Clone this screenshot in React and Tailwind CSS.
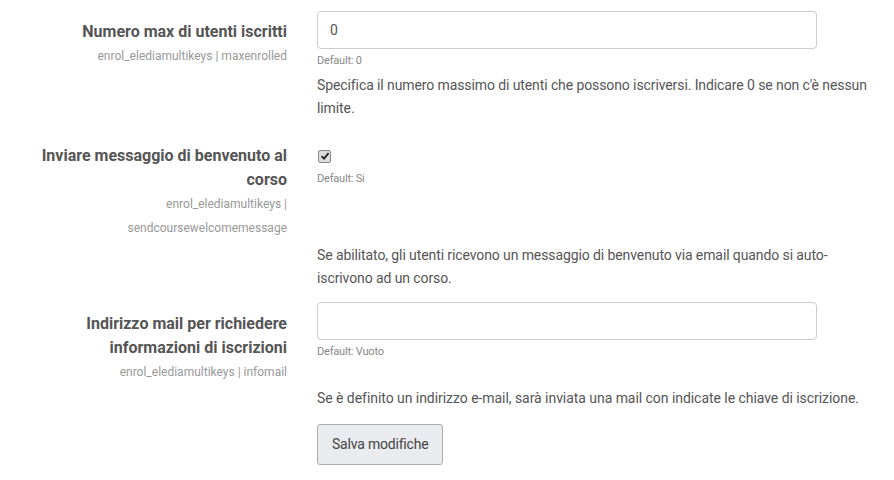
import React from "react";

const font = { fontFamily: "Roboto, 'Noto Sans', sans-serif" };

function Label({ title, sub, className = "" }) {
  return (
    <div className={`w-[287px] shrink-0 text-right ${className}`}>
      <div className="text-[16px] leading-[24px] font-bold text-[#555]">{title}</div>
      <div className="text-[12px] leading-[24px] text-[#999]">{sub}</div>
    </div>
  );
}

function Check() {
  return (
    <span className="inline-flex w-[13px] h-[13px] items-center justify-center rounded-[2px] border border-[#8a8a8a] bg-[#dcdcdc]">
      <svg width="10" height="10" viewBox="0 0 10 10">
        <path d="M1.5 5.2 L4 7.6 L8.6 2.2" fill="none" stroke="#222" strokeWidth="1.8" />
      </svg>
    </span>
  );
}

export default function App() {
  return (
    <div className="w-[894px] h-[480px] bg-white pt-[11px] text-[#555]" style={font}>
      {/* Numero max */}
      <div className="flex">
        <Label
          className="pt-[9px]"
          title="Numero max di utenti iscritti"
          sub="enrol_elediamultikeys | maxenrolled"
        />
        <div className="ml-[30px]">
          <div className="w-[500px] h-[38px] border border-[#ccc] rounded-[4px] px-[12px] flex items-center text-[14px] text-[#555]">
            0
          </div>
          <div className="mt-[3px] text-[11px] leading-[18px] tracking-[-0.2px] text-[#888]">Default: 0</div>
        </div>
      </div>
      <div className="ml-[317px] mt-[4px] text-[14px] leading-[23px] tracking-[-0.1px] whitespace-nowrap">
        Specifica il numero massimo di utenti che possono iscriversi. Indicare 0 se non c'è nessun
        <br />
        limite.
      </div>

      {/* Messaggio di benvenuto */}
      <div className="flex mt-[24px]">
        <Label
          title={<>Inviare messaggio di benvenuto al<br />corso</>}
          sub={<>enrol_elediamultikeys |<br />sendcoursewelcomemessage</>}
        />
        <div className="ml-[30px]">
          <div className="h-[24px] flex items-center pl-[1px]">
            <Check />
          </div>
          <div className="mt-[2px] text-[11px] leading-[18px] tracking-[-0.2px] text-[#888]">Default: Si</div>
        </div>
      </div>
      <div className="ml-[317px] mt-[4px] text-[14px] leading-[23px] tracking-[-0.1px] whitespace-nowrap">
        Se abilitato, gli utenti ricevono un messaggio di benvenuto via email quando si auto-
        <br />
        iscrivono ad un corso.
      </div>

      {/* Indirizzo mail */}
      <div className="flex mt-[12px]">
        <Label
          className="pt-[10px]"
          title={<>Indirizzo mail per richiedere<br />informazioni di iscrizioni</>}
          sub="enrol_elediamultikeys | infomail"
        />
        <div className="ml-[30px]">
          <div className="w-[500px] h-[38px] border border-[#ccc] rounded-[4px]" />
          <div className="mt-[3px] text-[11px] leading-[18px] tracking-[-0.2px] text-[#888]">Default: Vuoto</div>
        </div>
      </div>
      <div className="ml-[317px] mt-[3px] text-[14px] leading-[23px] tracking-[-0.05px] whitespace-nowrap">
        Se è definito un indirizzo e-mail, sarà inviata una mail con indicate le chiave di iscrizione.
      </div>

      <div className="ml-[317px] mt-[14px]">
        <button className="h-[41px] px-[14px] bg-[#e9ebee] border border-[#adadad] rounded-[3px] text-[14px] tracking-[-0.2px] text-[#444]">
          Salva modifiche
        </button>
      </div>
    </div>
  );
}
